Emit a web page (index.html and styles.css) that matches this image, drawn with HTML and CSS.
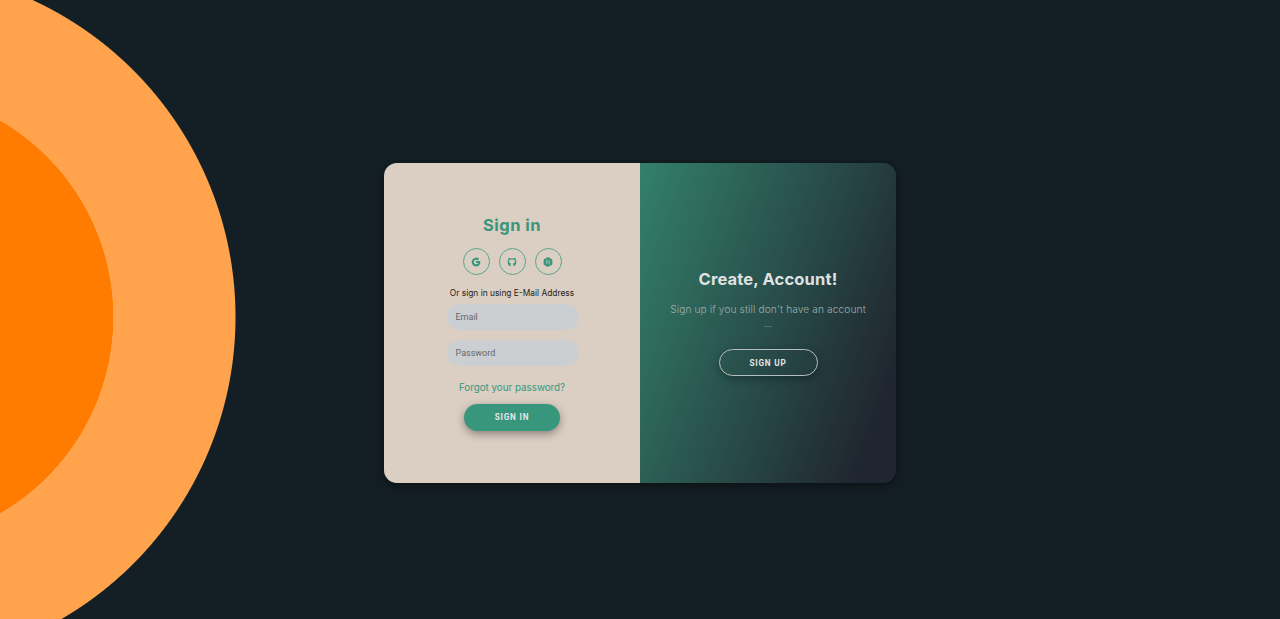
FILE: index.html
```html
<!DOCTYPE html>
<html lang="en">
<head>
    <meta charset="UTF-8">
    <meta name="viewport" content="width=device-width, initial-scale=1.0">
    <title>Sign in</title>
    <link rel="stylesheet" href="styles.css">
</head>

<body>
    <div class="container">
        <form class="sign-in">
            <h1>Sign in</h1>
            <div class="social">
                <a href="#" aria-label="Google">
                    <svg viewBox="0 0 24 24"><path d="M12.200 9.800v4.400h5.400c-.7 2.200-2.600 3.400-5.200 3.400a5.600 5.600 0 1 1 3.700-9.800l3.400-3.300A10.500 10.500 0 1 0 12.300 22.500c7.200 0 10.800-5.400 10-12.700z"/></svg>
                </a>
                <a href="#" aria-label="GitHub">
                    <svg viewBox="0 0 24 24"><path d="M8.600 22.400C4 20.900 1.500 16.900 1.500 12.300c0-2.700.8-4.700 2.200-6.300-.3-1.300-.2-2.800.3-4.100 1.600 0 3.100.8 4.400 1.800a14 14 0 0 1 7.200 0c1.300-1 2.800-1.800 4.400-1.800.5 1.300.6 2.800.3 4.100a9.200 9.200 0 0 1 2.200 6.300c0 4.600-2.500 8.600-7.100 10.100v-5c0-1.100-.3-1.800-.9-2.400 3.200-.5 4.700-1.800 4.700-4.500 0-3.300-2.300-4.600-7.200-4.600s-7.200 1.300-7.200 4.600c0 2.700 1.500 4 4.700 4.500-.6.600-.9 1.300-.9 2.400z"/></svg>
                </a>
                <a href="#" aria-label="HackerRank">
                    <svg viewBox="0 0 24 24"><path fill-rule="evenodd" d="M12 .5c1.500 0 9.300 4.400 10 5.700.8 1.400.8 10.200 0 11.600-.7 1.300-8.500 5.700-10 5.700s-9.300-4.400-10-5.700c-.8-1.400-.8-10.200 0-11.600C2.700 4.900 10.500.5 12 .5zM8.400 5.500v11.500h1.600v-4.200h4v5.700h1.600V7H14v4.200h-4V5.500z"/></svg>
                </a>
            </div>
            <span class="hint">Or sign in using E-Mail Address</span>
            <input type="email" placeholder="Email">
            <input type="password" placeholder="Password">
            <a class="forgot" href="#">Forgot your password?</a>
            <button type="button">Sign In</button>
        </form>

        <div class="overlay">
            <h1>Create, Account!</h1>
            <p>Sign up if you still don't have an account<br>...</p>
            <button type="button" class="ghost">Sign Up</button>
        </div>
    </div>
</body>
</html>
```
FILE: styles.css
```css
*{
    box-sizing: border-box;
}

body{
    margin: 0;
    height: 100vh;
    padding-top: 163px;
    font-family: Inter, "Liberation Sans", sans-serif;
    background: radial-gradient(circle at -113.5px 317px, #ff7c00 226.5px, #ffa44d 227px, #ffa44d 348.5px, #141f25 349.5px);
}

.container{
    display: flex;
    width: 512px;
    height: 320px;
    margin: 0 auto;
    border-radius: 13px;
    overflow: hidden;
    box-shadow: 0 3px 14px rgba(0,0,0,0.3), 0 2px 6px rgba(0,0,0,0.22);
}

.sign-in, .overlay{
    width: 50%;
    display: flex;
    flex-direction: column;
    align-items: center;
    text-align: center;
}

.sign-in{
    background-color: #dbcfc3;
    padding-top: 52px;
}

.overlay{
    background: linear-gradient(110deg, #33806b 0%, #264344 60%, #20262f 88%);
    color: #dfe2e1;
    padding-top: 106px;
}

h1{
    margin: 0;
    font-size: 16.5px;
    line-height: 21px;
    font-weight: 700;
}

.sign-in h1{
    color: #38967c;
    letter-spacing: 0.5px;
}

.overlay h1{
    letter-spacing: 0.15px;
}

a{
    color: #38967c;
    text-decoration: none;
}

.social{
    display: flex;
    gap: 9px;
    margin-top: 12px;
}

.social a{
    display: flex;
    align-items: center;
    justify-content: center;
    width: 27px;
    height: 27px;
    border: 1px solid #5aa48d;
    border-radius: 50%;
}

.social svg{
    width: 10px;
    height: 10px;
    fill: #38967c;
}

.hint{
    margin-top: 13px;
    font-size: 8.4px;
    line-height: 11px;
    color: #222;
}

input{
    width: 132px;
    height: 26px;
    margin: 5px 0 5px 1px;
    padding: 0 9px 1px;
    border: none;
    border-radius: 13px;
    background-color: #cccfd1;
    font: 9px Roboto, sans-serif;
}

input::placeholder{
    color: #65676b;
}

.forgot{
    margin-top: 10px;
    font-size: 9.8px;
    line-height: 14px;
}

button{
    width: 96px;
    height: 27px;
    margin-top: 9px;
    padding: 0 0 2px;
    border: none;
    border-radius: 14px;
    background-color: #38967c;
    color: #e6e6e3;
    font: bold 8.2px Roboto, sans-serif;
    letter-spacing: 0.8px;
    text-transform: uppercase;
    box-shadow: 0 3px 8px rgba(0,0,0,0.38);
}

.overlay p{
    margin: 12px 0 0;
    font-size: 10.2px;
    font-weight: 300;
    line-height: 14px;
    letter-spacing: 0.1px;
    color: #9bb0ac;
}

.ghost{
    width: 99px;
    margin-top: 19px;
    padding: 0;
    border: 1px solid #b5bfbd;
    background-color: transparent;
    box-shadow: 0 3px 8px rgba(0,0,0,0.3);
}
```
